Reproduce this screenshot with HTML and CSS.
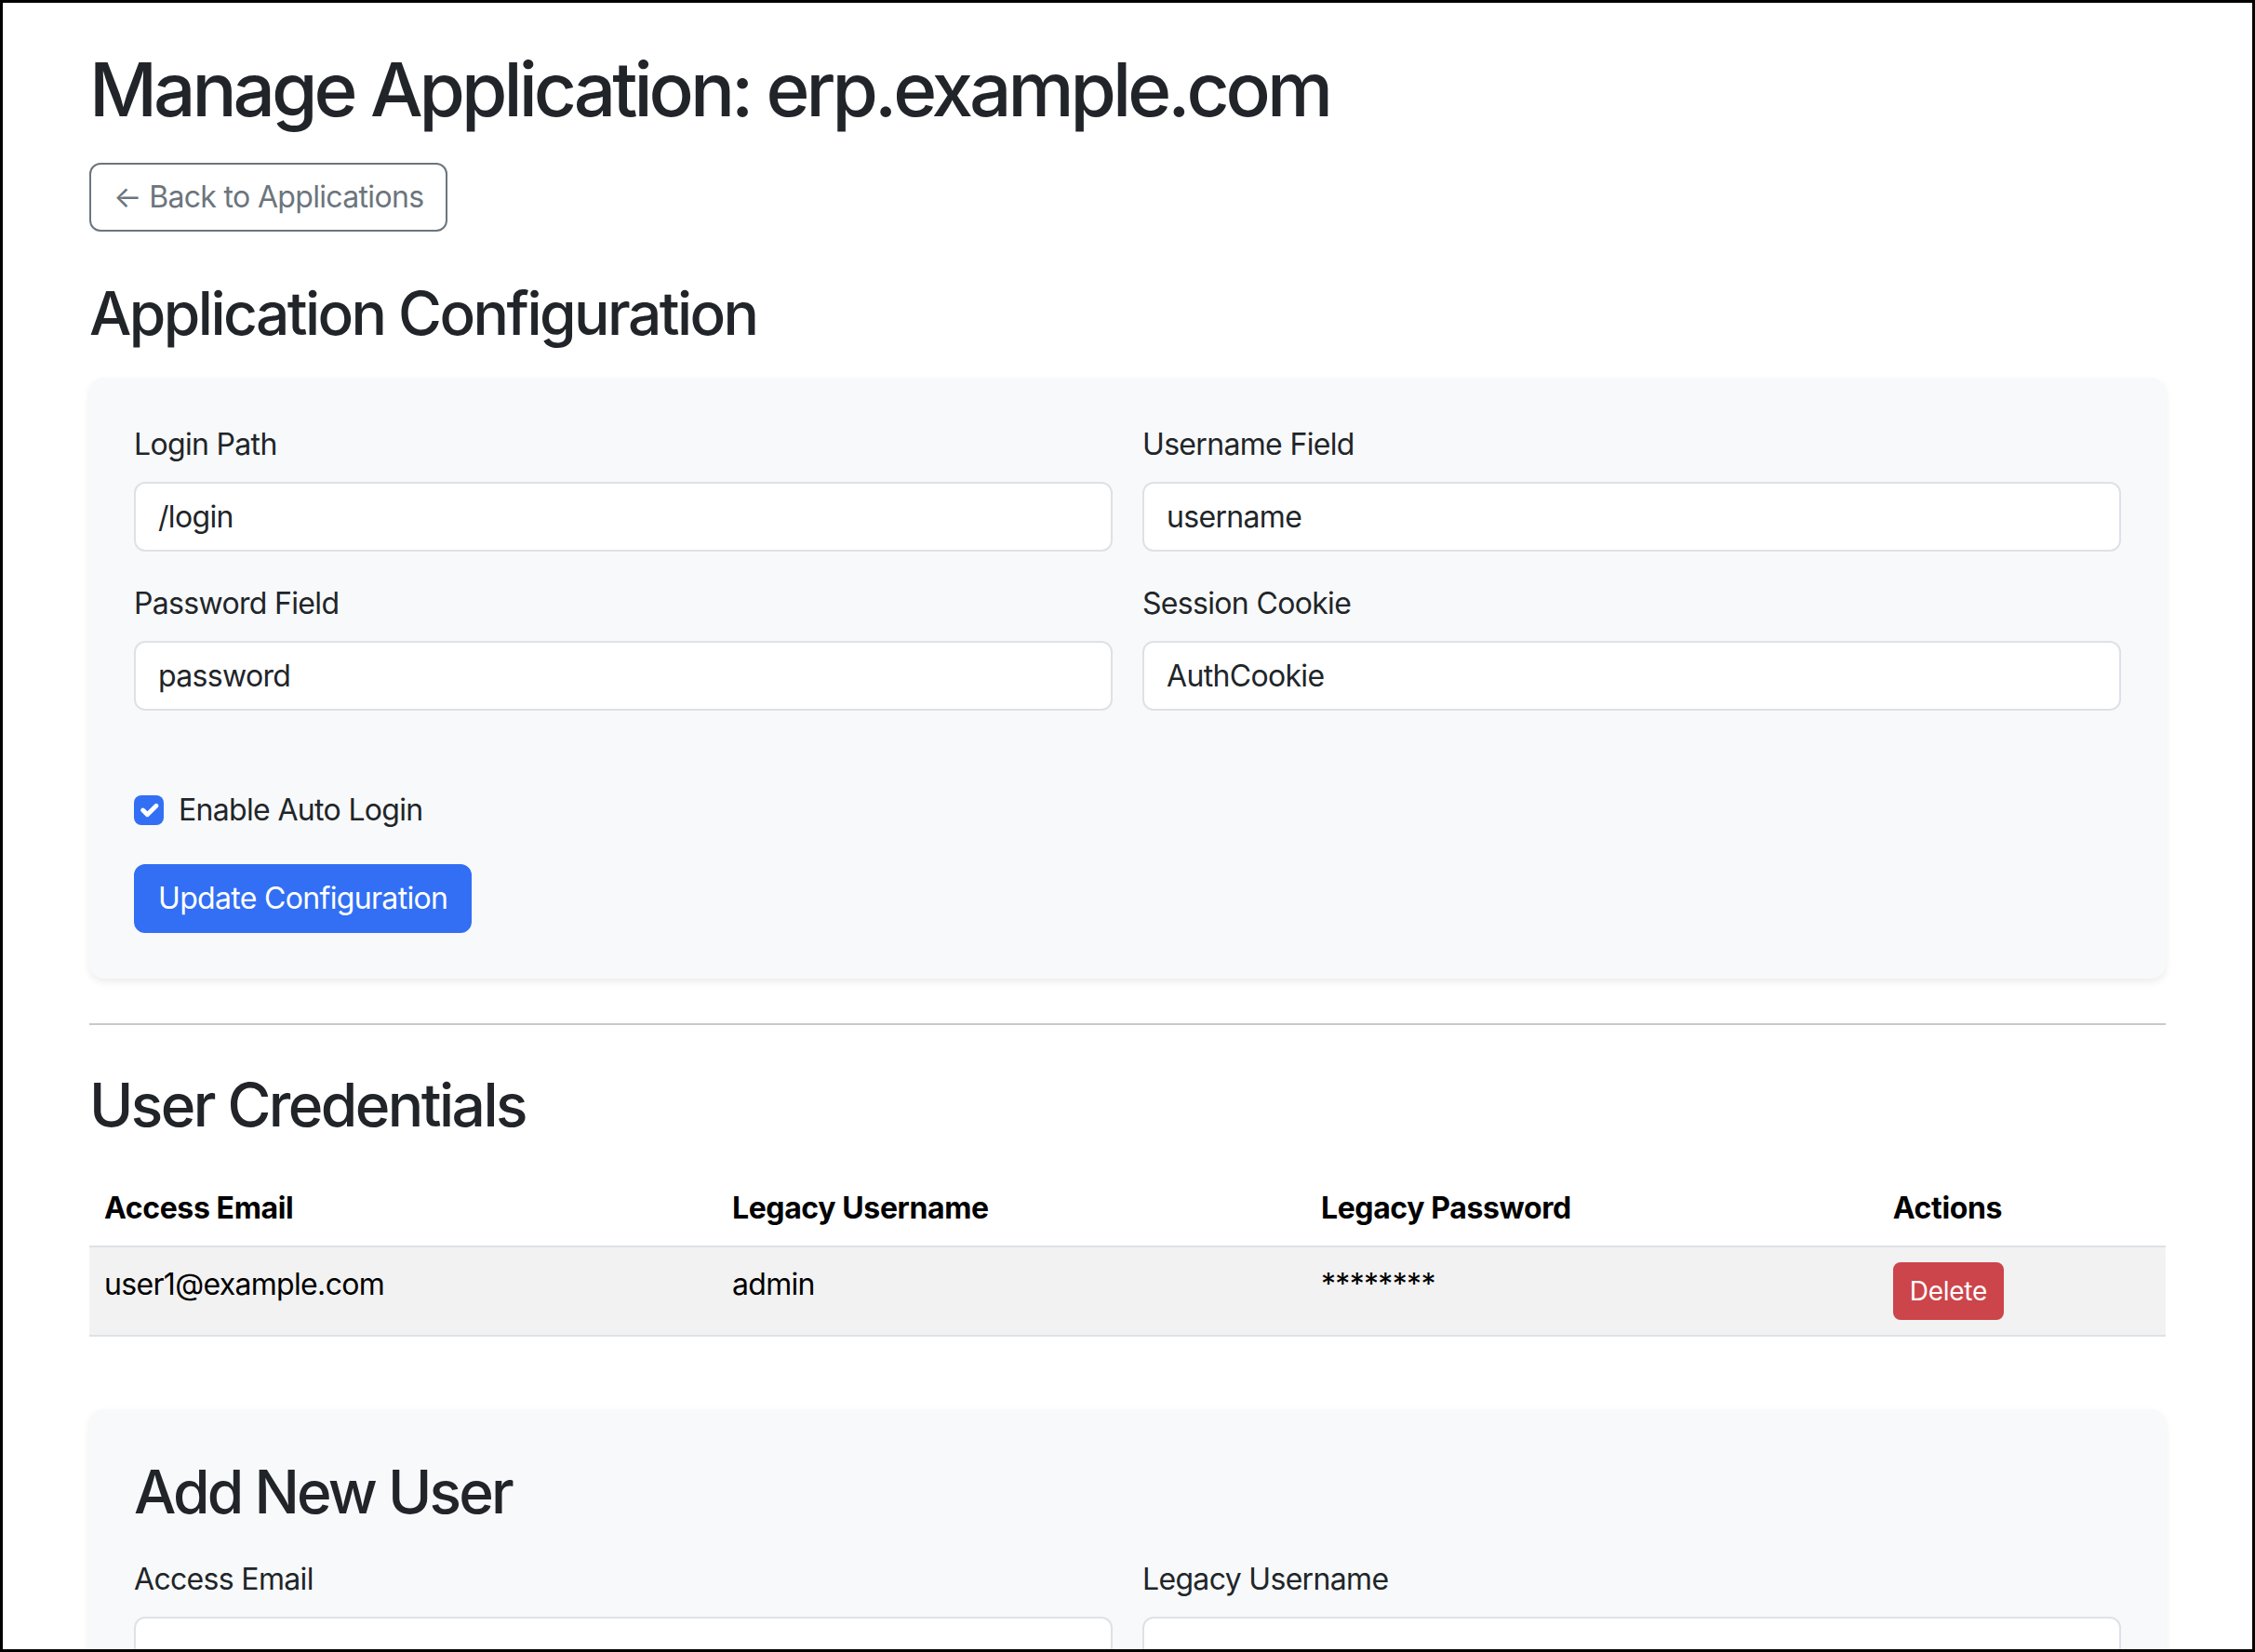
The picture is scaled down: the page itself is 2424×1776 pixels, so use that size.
FILE: index.html
```html
<!DOCTYPE html>
<html lang="en">
<head>
<meta charset="utf-8">
<title>Manage Application: erp.example.com</title>
<link rel="stylesheet" href="styles.css">
</head>
<body>
<div class="frame"></div>
<div class="container">
  <h1 class="page-title">Manage Application: erp.example.com</h1>
  <div class="back-row">
    <a class="btn btn-outline" href="#">&larr; Back to Applications</a>
  </div>

  <h2 class="section-title config-title">Application Configuration</h2>
  <form class="panel config-panel">
    <div class="form-grid">
      <div class="field">
        <label class="field-label">Login Path</label>
        <input class="field-input" type="text" value="/login">
      </div>
      <div class="field">
        <label class="field-label">Username Field</label>
        <input class="field-input" type="text" value="username">
      </div>
      <div class="field">
        <label class="field-label">Password Field</label>
        <input class="field-input" type="text" value="password">
      </div>
      <div class="field">
        <label class="field-label">Session Cookie</label>
        <input class="field-input" type="text" value="AuthCookie">
      </div>
    </div>
    <div class="check-row">
      <span class="check-box">
        <svg viewBox="0 0 20 20" width="32" height="32"><path d="m6 10 3 3 6-6" fill="none" stroke="#fff" stroke-width="3" stroke-linecap="round" stroke-linejoin="round"/></svg>
      </span>
      <span class="check-label">Enable Auto Login</span>
    </div>
    <button class="btn btn-primary" type="button">Update Configuration</button>
  </form>

  <hr class="divider">

  <h2 class="section-title users-title">User Credentials</h2>
  <div class="table-wrap">
    <table class="cred-table">
      <thead>
        <tr>
          <th class="col-email">Access Email</th>
          <th class="col-user">Legacy Username</th>
          <th class="col-pass">Legacy Password</th>
          <th class="col-actions">Actions</th>
        </tr>
      </thead>
      <tbody>
        <tr>
          <td>user1@example.com</td>
          <td>admin</td>
          <td>********</td>
          <td><button class="btn btn-danger" type="button">Delete</button></td>
        </tr>
      </tbody>
    </table>
  </div>

  <form class="panel add-panel">
    <h2 class="section-title add-title">Add New User</h2>
    <div class="form-grid">
      <div class="field">
        <label class="field-label">Access Email</label>
        <input class="field-input" type="email" value="">
      </div>
      <div class="field">
        <label class="field-label">Legacy Username</label>
        <input class="field-input" type="text" value="">
      </div>
      <div class="field">
        <label class="field-label">Legacy Password</label>
        <input class="field-input" type="password" value="">
      </div>
    </div>
    <button class="btn btn-primary add-btn" type="button">Add User</button>
  </form>
</div>
</body>
</html>
```

FILE: styles.css
```css
* {
  box-sizing: border-box;
}

html {
  scrollbar-width: none;
}

html::-webkit-scrollbar {
  display: none;
}

body {
  margin: 0;
  font-family: Inter, "Noto Sans", "Liberation Sans", sans-serif;
  font-size: 32px;
  line-height: 1.5;
  letter-spacing: -0.021em;
  color: #212529;
  background: #ffffff;
}

.frame {
  position: fixed;
  inset: 0;
  border: 3px solid #000;
  pointer-events: none;
  z-index: 10;
}

.container {
  width: 2280px;
  margin: 48px auto 0;
  padding: 0 24px 200px;
}

.page-title {
  margin: 0 0 31px;
  font-size: 80px;
  font-weight: 500;
  line-height: 1.2;
  letter-spacing: -0.05em;
}

.back-row {
  margin-bottom: 50px;
}

.btn {
  display: inline-block;
  font-family: inherit;
  font-size: 32px;
  line-height: 48px;
  letter-spacing: -0.021em;
  padding: 11px 24px;
  border: 2px solid transparent;
  border-radius: 12px;
  text-decoration: none;
  cursor: pointer;
}

.btn-outline {
  color: #6c757d;
  border-color: #6c757d;
  background: transparent;
}

.btn-primary {
  color: #fff;
  background: #326ff4;
  border-color: #326ff4;
}

.btn-danger {
  font-size: 28px;
  line-height: 42px;
  letter-spacing: -0.01em;
  padding: 8px 16px;
  border-radius: 8px;
  color: #fff;
  background: #cc454b;
  border-color: #cc454b;
}

.section-title {
  margin: 0;
  font-size: 64px;
  font-weight: 500;
  line-height: 1.2;
  letter-spacing: -0.04em;
}

.config-title {
  margin-bottom: 30px;
}

.users-title {
  margin-bottom: 32px;
}

.add-title {
  margin-bottom: 32px;
  letter-spacing: -0.045em;
}

.panel {
  display: block;
  margin: 0;
  padding: 48px;
  background: #f8f9fa;
  border-radius: 16px;
  box-shadow: 0 4px 8px rgba(0, 0, 0, 0.075);
}

.config-panel {
  padding-bottom: 49px;
}

.form-grid {
  display: grid;
  grid-template-columns: 1fr 1fr;
  column-gap: 32px;
  row-gap: 32px;
}

.field-label {
  display: block;
  margin-bottom: 16px;
  line-height: 48px;
}

.field-input {
  display: block;
  width: 100%;
  height: 75px;
  padding: 12px 24px;
  font-family: inherit;
  font-size: 32px;
  letter-spacing: -0.021em;
  color: #212529;
  background: #fff;
  border: 2px solid #dee2e6;
  border-radius: 12px;
  outline: none;
}

.check-row {
  display: flex;
  align-items: flex-start;
  margin-top: 83px;
  margin-bottom: 34px;
  min-height: 48px;
}

.check-box {
  display: flex;
  width: 32px;
  height: 32px;
  margin-top: 8px;
  margin-right: 16px;
  background: #326ff4;
  border-radius: 8px;
}

.check-label {
  line-height: 48px;
}

.divider {
  margin: 48px 0;
  border: 0;
  border-top: 2px solid #c8c9ca;
}

.table-wrap {
  overflow-x: auto;
}

.cred-table {
  width: 100%;
  margin-bottom: 32px;
  border-collapse: collapse;
  color: #000;
}

.cred-table th,
.cred-table td {
  padding: 16px;
  text-align: left;
  vertical-align: top;
  line-height: 48px;
  border-bottom: 2px solid #dee2e6;
}

.cred-table th {
  font-weight: 700;
  letter-spacing: -0.012em;
}

.cred-table td {
  background: #f2f2f2;
}

.col-email {
  width: 30.24%;
}

.col-user {
  width: 28.36%;
}

.col-pass {
  width: 27.55%;
}

.col-actions {
  width: 13.85%;
}

.add-panel {
  margin-top: 46px;
  padding-top: 51px;
}

.add-btn {
  margin-top: 48px;
}
```
